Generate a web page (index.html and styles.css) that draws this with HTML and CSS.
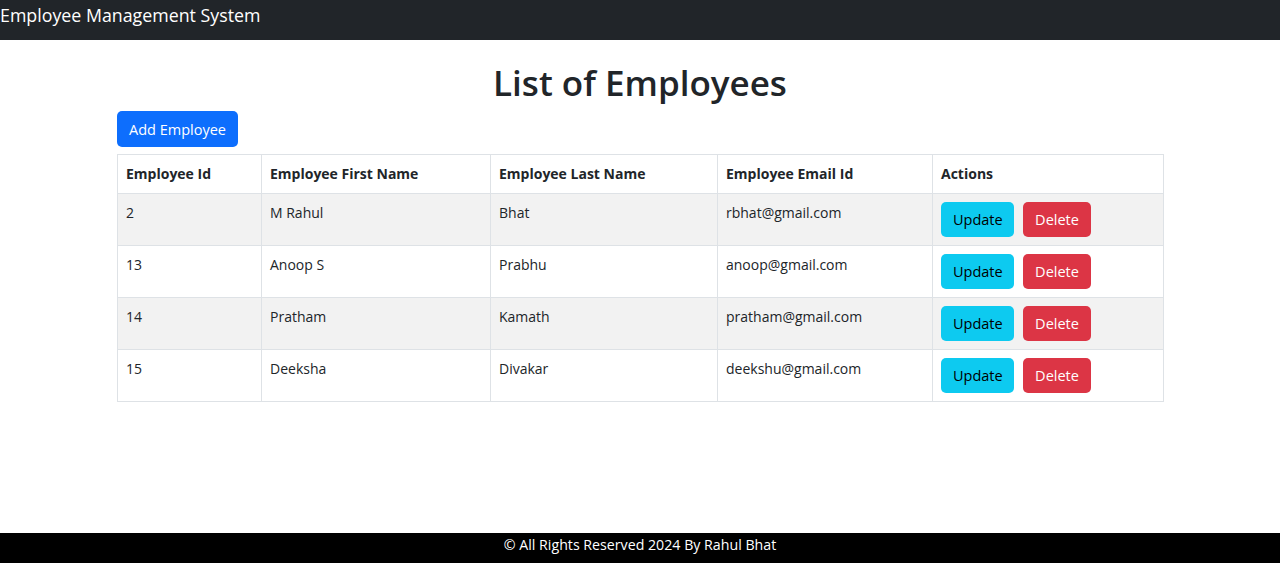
FILE: index.html
```html
<!DOCTYPE html>
<html lang="en">
<head>
    <meta charset="UTF-8">
    <meta name="viewport" content="width=device-width, initial-scale=1.0">
    <title>Employee Management System</title>
    <link rel="stylesheet" href="styles.css">
</head>
<body>
    <div class="page">
        <header class="navbar">
            <span class="brand">Employee Management System</span>
        </header>

        <main class="container">
            <h2 class="title">List of Employees</h2>
            <div class="toolbar">
                <button class="btn btn-primary">Add Employee</button>
            </div>
            <table class="table">
                <colgroup>
                    <col class="col-id">
                    <col class="col-first">
                    <col class="col-last">
                    <col class="col-email">
                    <col class="col-actions">
                </colgroup>
                <thead>
                    <tr>
                        <th>Employee Id</th>
                        <th>Employee First Name</th>
                        <th>Employee Last Name</th>
                        <th>Employee Email Id</th>
                        <th>Actions</th>
                    </tr>
                </thead>
                <tbody>
                    <tr>
                        <td>2</td>
                        <td>M Rahul</td>
                        <td>Bhat</td>
                        <td>rbhat@gmail.com</td>
                        <td><button class="btn btn-info">Update</button><button class="btn btn-danger">Delete</button></td>
                    </tr>
                    <tr>
                        <td>13</td>
                        <td>Anoop S</td>
                        <td>Prabhu</td>
                        <td>anoop@gmail.com</td>
                        <td><button class="btn btn-info">Update</button><button class="btn btn-danger">Delete</button></td>
                    </tr>
                    <tr>
                        <td>14</td>
                        <td>Pratham</td>
                        <td>Kamath</td>
                        <td>pratham@gmail.com</td>
                        <td><button class="btn btn-info">Update</button><button class="btn btn-danger">Delete</button></td>
                    </tr>
                    <tr>
                        <td>15</td>
                        <td>Deeksha</td>
                        <td>Divakar</td>
                        <td>deekshu@gmail.com</td>
                        <td><button class="btn btn-info">Update</button><button class="btn btn-danger">Delete</button></td>
                    </tr>
                </tbody>
            </table>
        </main>

        <footer class="footer">
            <span>&copy; All Rights Reserved 2024 By Rahul Bhat</span>
        </footer>
    </div>
</body>
</html>
```

FILE: styles.css
```css
* {
    box-sizing: border-box;
}

body {
    margin: 0;
    font-family: 'Open Sans', 'Noto Sans', sans-serif;
    font-size: 14px;
    color: #212529;
    background: #fff;
}

.page {
    display: flex;
    flex-direction: column;
    height: 563px;
}

.navbar {
    background: #212529;
    height: 40px;
    padding: 3px 0 0 0;
}

.brand {
    color: #fff;
    font-size: 17.8px;
    line-height: 24px;
}

.container {
    flex: 1;
    width: 1046px;
    margin: 0 auto;
}

.title {
    margin: 19px 0 0 0;
    text-align: center;
    font-size: 35px;
    font-weight: 600;
    line-height: 48px;
}

.toolbar {
    margin-top: 4px;
}

.btn {
    display: inline-block;
    border: none;
    border-radius: 5px;
    font-family: inherit;
    font-size: 14.5px;
    height: 35px;
    padding: 0 12px;
    cursor: pointer;
}

.btn-primary {
    background: #0d6efd;
    color: #fff;
    height: 36px;
}

.btn-info {
    background: #0dcaf0;
    color: #000;
    width: 73px;
    margin-right: 9px;
}

.btn-danger {
    background: #dc3545;
    color: #fff;
    width: 68px;
}

.table {
    width: 1046px;
    margin-top: 7px;
    border-collapse: collapse;
    table-layout: fixed;
}

.col-id { width: 144px; }
.col-first { width: 229px; }
.col-last { width: 227px; }
.col-email { width: 215px; }
.col-actions { width: 231px; }

.table th,
.table td {
    border: 1px solid #dee2e6;
    padding: 8px;
    text-align: left;
    vertical-align: top;
    line-height: 21px;
}

.table th {
    font-weight: 700;
    height: 39px;
}

.table td {
    height: 51.5px;
}

.table tbody tr:nth-child(odd) td {
    background: #f2f2f2;
}

.footer {
    background: #000;
    color: #fff;
    height: 30px;
    text-align: center;
    font-size: 14.2px;
    line-height: 24px;
}
```
